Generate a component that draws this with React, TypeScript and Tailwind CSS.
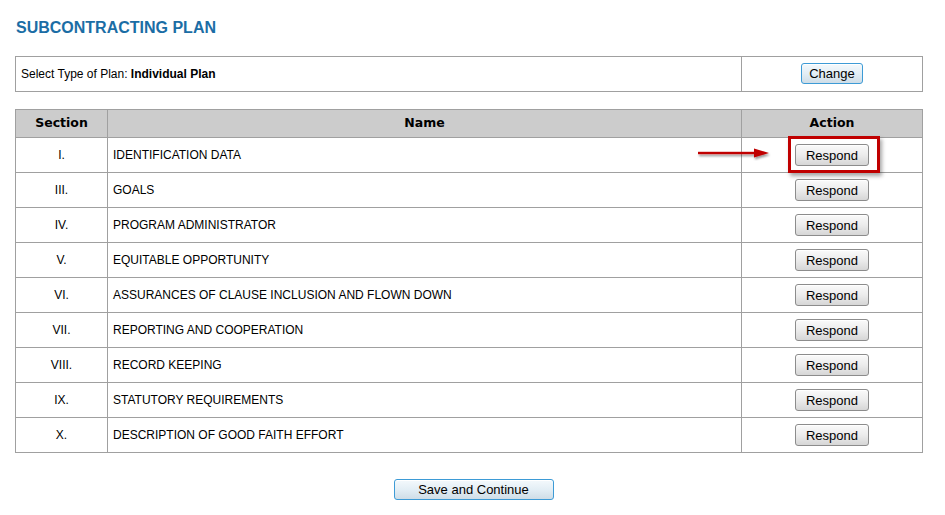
import * as React from "react";

const sections = [
  { num: "I.", name: "IDENTIFICATION DATA" },
  { num: "III.", name: "GOALS" },
  { num: "IV.", name: "PROGRAM ADMINISTRATOR" },
  { num: "V.", name: "EQUITABLE OPPORTUNITY" },
  { num: "VI.", name: "ASSURANCES OF CLAUSE INCLUSION AND FLOWN DOWN" },
  { num: "VII.", name: "REPORTING AND COOPERATION" },
  { num: "VIII.", name: "RECORD KEEPING" },
  { num: "IX.", name: "STATUTORY REQUIREMENTS" },
  { num: "X.", name: "DESCRIPTION OF GOOD FAITH EFFORT" },
];

const grayBtn =
  "h-[22px] rounded-[3px] border border-[#8c8c8c] bg-gradient-to-b from-[#fafafa] via-[#ececec] to-[#d6d6d6] text-[13px] leading-none text-black shadow-[inset_0_1px_0_#fff]";
const blueBtn =
  "rounded-[3px] border border-[#3d9bd6] bg-gradient-to-b from-[#f4f9fc] via-[#e3eef5] to-[#cfdde7] text-[13px] leading-none text-black shadow-[inset_0_1px_0_#fff]";

export default function App() {
  return (
    <div className="min-h-[515px] bg-white px-[15px] font-['Liberation_Sans',Arial,sans-serif] text-black">
      <h1 className="pt-[18px] pl-px text-[16px] font-bold leading-[20px] text-[#1b6da5]">
        SUBCONTRACTING PLAN
      </h1>

      <table className="mt-[18px] w-[907px] table-fixed border-collapse">
        <colgroup>
          <col className="w-[726px]" />
          <col className="w-[181px]" />
        </colgroup>
        <tbody>
          <tr className="h-[35px]">
            <td className="border border-[#a0a0a0] pl-[5px] text-[12px]">
              Select Type of Plan: <b>Individual Plan</b>
            </td>
            <td className="border border-[#a0a0a0] pb-[2px] text-center">
              <button type="button" className={`h-[21px] w-[62px] ${blueBtn}`}>
                Change
              </button>
            </td>
          </tr>
        </tbody>
      </table>

      <table className="mt-[17px] w-[907px] table-fixed border-collapse">
        <colgroup>
          <col className="w-[92px]" />
          <col className="w-[634px]" />
          <col className="w-[181px]" />
        </colgroup>
        <thead>
          <tr className="h-[28px] bg-[#cccccc] font-['DejaVu_Sans',Verdana,sans-serif] text-[12.5px] font-bold">
            <th className="border border-[#a0a0a0] text-center">Section</th>
            <th className="border border-[#a0a0a0] text-center">Name</th>
            <th className="border border-[#a0a0a0] text-center">Action</th>
          </tr>
        </thead>
        <tbody>
          {sections.map((s, i) => (
            <tr key={s.num} className="h-[35px] text-[12px]">
              <td className="border border-[#a0a0a0] text-center">{s.num}</td>
              <td className="border border-[#a0a0a0] pl-[5px]">{s.name}</td>
              <td className="border border-[#a0a0a0] text-center">
                <span className="relative inline-block align-middle">
                  <button type="button" className={`w-[74px] ${grayBtn}`}>
                    Respond
                  </button>
                  {i === 0 && (
                    <>
                      <span className="pointer-events-none absolute -left-[7px] -top-[8px] h-[37px] w-[92px] border-[3px] border-[#c00000] shadow-[2px_3px_4px_rgba(0,0,0,0.35)]" />
                      <svg
                        className="pointer-events-none absolute -left-[98px] top-[3px]"
                        width="74"
                        height="14"
                        viewBox="0 0 74 14"
                      >
                        <defs>
                          <filter id="sh" x="-10%" y="-50%" width="120%" height="200%">
                            <feDropShadow dx="1" dy="2" stdDeviation="1.2" floodColor="#000" floodOpacity="0.4" />
                          </filter>
                        </defs>
                        <g filter="url(#sh)">
                          <rect x="1" y="4.8" width="60" height="2.4" fill="#c00000" />
                          <polygon points="57,1.5 72,6 57,10.5" fill="#c00000" />
                        </g>
                      </svg>
                    </>
                  )}
                </span>
              </td>
            </tr>
          ))}
        </tbody>
      </table>

      <div className="mt-[26px] flex justify-center pl-[2px]">
        <button type="button" className={`h-[21px] w-[160px] ${blueBtn}`}>
          Save and Continue
        </button>
      </div>
    </div>
  );
}
